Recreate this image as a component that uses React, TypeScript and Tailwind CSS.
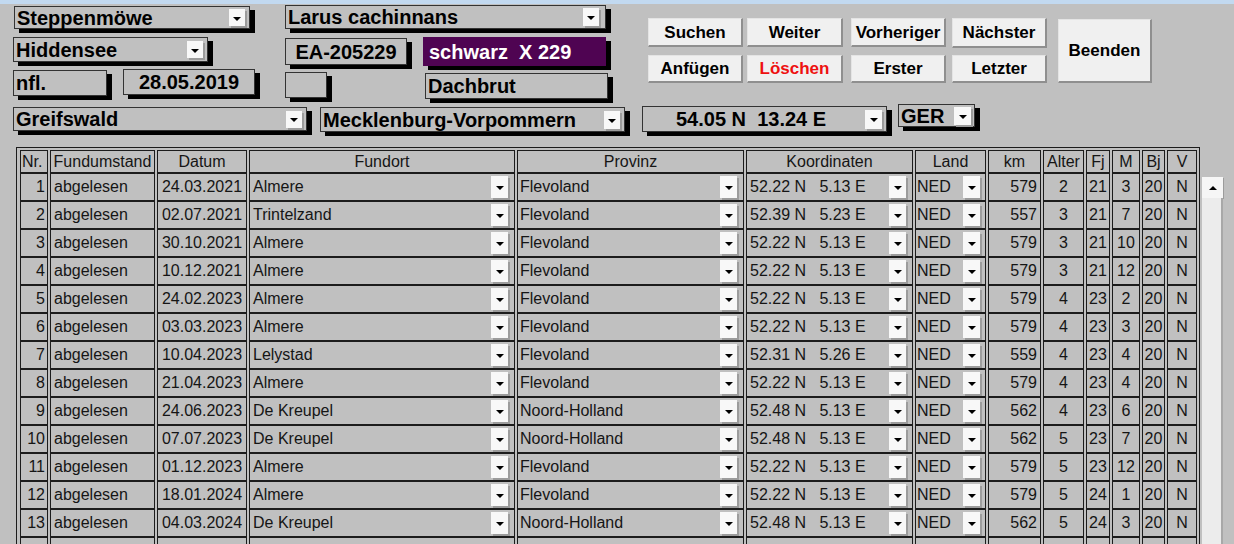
import React from "react";

function TriDown() {
  return <div className="w-0 h-0 border-l-[4px] border-r-[4px] border-t-[4px] border-l-transparent border-r-transparent border-t-black mt-[2px]" />;
}
function TriUp() {
  return <div className="w-0 h-0 border-l-[4px] border-r-[4px] border-b-[4px] border-l-transparent border-r-transparent border-b-black" />;
}

function DD({ cls }: { cls: string }) {
  return (
    <div className={"flex items-center justify-center bg-[#f8f8f8] shadow-[2px_2px_0_#9c9c9c] shrink-0 " + cls}>
      <TriDown />
    </div>
  );
}

function Field({
  cls,
  children,
  dd,
  ddCls,
  textCls,
}: {
  cls: string;
  children?: React.ReactNode;
  dd?: boolean;
  ddCls?: string;
  textCls?: string;
}) {
  return (
    <div
      className={
        "flex items-center border border-[#333333] shadow-[5px_4px_0_#000] font-bold text-[20px] leading-none shrink-0 " +
        cls
      }
    >
      <span className={"flex-1 whitespace-pre " + (textCls ?? "pl-[2px]")}>{children}</span>
      {dd && <DD cls={ddCls ?? "w-[16px] h-[17px] mr-[4px]"} />}
    </div>
  );
}

function Btn({ cls, children }: { cls: string; children: React.ReactNode }) {
  return (
    <div
      className={
        "flex items-center justify-center bg-[#f0f0f0] border-t border-l border-t-[#e4e4e4] border-l-[#e4e4e4] border-r-2 border-b-2 border-r-[#8f8f8f] border-b-[#8f8f8f] font-bold text-[17px] leading-none shrink-0 " +
        cls
      }
    >
      {children}
    </div>
  );
}

type Row = {
  nr: string;
  st: string;
  d: string;
  ort: string;
  prov: string;
  koord: string;
  land: string;
  km: string;
  alter: string;
  fj: string;
  m: string;
  bj: string;
  v: string;
};

const A = "52.22 N   5.13 E";
const K = "52.48 N   5.13 E";

const rows: Row[] = [
  { nr: "1", st: "abgelesen", d: "24.03.2021", ort: "Almere", prov: "Flevoland", koord: A, land: "NED", km: "579", alter: "2", fj: "21", m: "3", bj: "20", v: "N" },
  { nr: "2", st: "abgelesen", d: "02.07.2021", ort: "Trintelzand", prov: "Flevoland", koord: "52.39 N   5.23 E", land: "NED", km: "557", alter: "3", fj: "21", m: "7", bj: "20", v: "N" },
  { nr: "3", st: "abgelesen", d: "30.10.2021", ort: "Almere", prov: "Flevoland", koord: A, land: "NED", km: "579", alter: "3", fj: "21", m: "10", bj: "20", v: "N" },
  { nr: "4", st: "abgelesen", d: "10.12.2021", ort: "Almere", prov: "Flevoland", koord: A, land: "NED", km: "579", alter: "3", fj: "21", m: "12", bj: "20", v: "N" },
  { nr: "5", st: "abgelesen", d: "24.02.2023", ort: "Almere", prov: "Flevoland", koord: A, land: "NED", km: "579", alter: "4", fj: "23", m: "2", bj: "20", v: "N" },
  { nr: "6", st: "abgelesen", d: "03.03.2023", ort: "Almere", prov: "Flevoland", koord: A, land: "NED", km: "579", alter: "4", fj: "23", m: "3", bj: "20", v: "N" },
  { nr: "7", st: "abgelesen", d: "10.04.2023", ort: "Lelystad", prov: "Flevoland", koord: "52.31 N   5.26 E", land: "NED", km: "559", alter: "4", fj: "23", m: "4", bj: "20", v: "N" },
  { nr: "8", st: "abgelesen", d: "21.04.2023", ort: "Almere", prov: "Flevoland", koord: A, land: "NED", km: "579", alter: "4", fj: "23", m: "4", bj: "20", v: "N" },
  { nr: "9", st: "abgelesen", d: "24.06.2023", ort: "De Kreupel", prov: "Noord-Holland", koord: K, land: "NED", km: "562", alter: "4", fj: "23", m: "6", bj: "20", v: "N" },
  { nr: "10", st: "abgelesen", d: "07.07.2023", ort: "De Kreupel", prov: "Noord-Holland", koord: K, land: "NED", km: "562", alter: "5", fj: "23", m: "7", bj: "20", v: "N" },
  { nr: "11", st: "abgelesen", d: "01.12.2023", ort: "Almere", prov: "Flevoland", koord: A, land: "NED", km: "579", alter: "5", fj: "23", m: "12", bj: "20", v: "N" },
  { nr: "12", st: "abgelesen", d: "18.01.2024", ort: "Almere", prov: "Flevoland", koord: A, land: "NED", km: "579", alter: "5", fj: "24", m: "1", bj: "20", v: "N" },
  { nr: "13", st: "abgelesen", d: "04.03.2024", ort: "De Kreupel", prov: "Noord-Holland", koord: K, land: "NED", km: "562", alter: "5", fj: "24", m: "3", bj: "20", v: "N" },
];

const cell = "border border-[#1c1c1c] flex items-center shrink-0 overflow-hidden whitespace-pre";

const W = {
  nr: "w-[28px]",
  st: "w-[105px]",
  d: "w-[90px]",
  ort: "w-[266px]",
  prov: "w-[227px]",
  koord: "w-[167px]",
  land: "w-[71px]",
  km: "w-[53px]",
  alter: "w-[41px]",
  fj: "w-[24px]",
  m: "w-[28px]",
  bj: "w-[23px]",
  v: "w-[30px]",
};

function Header() {
  const h = cell + " h-[23px] justify-center";
  return (
    <div className="flex gap-[2px]">
      <div className={h + " " + W.nr + " !justify-start pl-[1px]"}>Nr.</div>
      <div className={h + " " + W.st}>Fundumstand</div>
      <div className={h + " " + W.d}>Datum</div>
      <div className={h + " " + W.ort}>Fundort</div>
      <div className={h + " " + W.prov}>Provinz</div>
      <div className={h + " " + W.koord}>Koordinaten</div>
      <div className={h + " " + W.land}>Land</div>
      <div className={h + " " + W.km}>km</div>
      <div className={h + " " + W.alter}>Alter</div>
      <div className={h + " " + W.fj}>Fj</div>
      <div className={h + " " + W.m}>M</div>
      <div className={h + " " + W.bj}>Bj</div>
      <div className={h + " " + W.v}>V</div>
    </div>
  );
}

function BodyRow({ r, empty }: { r?: Row; empty?: boolean }) {
  const c = cell + " h-[28px]";
  const ddc = "w-[17px] h-[22px] mr-[6px]";
  return (
    <div className="flex gap-[2px]">
      <div className={c + " " + W.nr + " justify-end pr-[2px]"}>{r?.nr}</div>
      <div className={c + " " + W.st + " pl-[3px]"}>{r?.st}</div>
      <div className={c + " " + W.d + " justify-center"}>{r?.d}</div>
      <div className={c + " " + W.ort}>
        <span className="flex-1 pl-[3px]">{r?.ort}</span>
        {!empty && <DD cls={ddc} />}
      </div>
      <div className={c + " " + W.prov}>
        <span className="flex-1 pl-[2px]">{r?.prov}</span>
        {!empty && <DD cls={ddc} />}
      </div>
      <div className={c + " " + W.koord}>
        <span className="flex-1 pl-[3px]">{r?.koord}</span>
        {!empty && <DD cls={ddc} />}
      </div>
      <div className={c + " " + W.land}>
        <span className="flex-1 pl-[1px]">{r?.land}</span>
        {!empty && <DD cls={"w-[17px] h-[22px] mr-[5px]"} />}
      </div>
      <div className={c + " " + W.km + " justify-end pr-[3px]"}>{r?.km}</div>
      <div className={c + " " + W.alter + " justify-center"}>{r?.alter}</div>
      <div className={c + " " + W.fj + " justify-center"}>{r?.fj}</div>
      <div className={c + " " + W.m + " justify-center"}>{r?.m}</div>
      <div className={c + " " + W.bj + " justify-center"}>{r?.bj}</div>
      <div className={c + " " + W.v + " justify-center"}>{r?.v}</div>
    </div>
  );
}

export default function App() {
  return (
    <div className="w-[1234px] h-[544px] overflow-hidden bg-[#c0c0c0] text-black font-['Liberation_Sans',Arial,sans-serif]">
      <div className="h-[4px] bg-[#c2d9f0]" />

      {/* upper form */}
      <div className="flex">
        <div className="flex flex-col w-[612px] shrink-0">
          {/* row 1 */}
          <div className="flex items-start h-[29px]">
            <Field cls="ml-[14px] mt-[2px] w-[236px] h-[23px]" dd>
              Steppenmöwe
            </Field>
            <Field cls="ml-[35px] mt-[1px] w-[321px] h-[24px]" dd ddCls="w-[16px] h-[18px] mr-[6px]">
              Larus cachinnans
            </Field>
          </div>
          {/* row 2 */}
          <div className="flex items-start h-[33px]">
            <Field cls="ml-[13px] mt-[4px] w-[195px] h-[25px]" dd>
              Hiddensee
            </Field>
            <Field cls="ml-[77px] mt-[5px] w-[122px] h-[27px]" textCls="text-center">
              EA-205229
            </Field>
            <Field
              cls="ml-[16px] mt-[4px] w-[183px] h-[29px] !bg-[#4f0452] text-white !border-[#4f0452]"
              textCls="pl-[5px]"
            >
              {"schwarz  X 229"}
            </Field>
          </div>
          {/* row 3 */}
          <div className="flex items-start h-[34px]">
            <Field cls="ml-[13px] mt-[4px] w-[94px] h-[26px]">nfl.</Field>
            <Field cls="ml-[16px] mt-[3px] w-[132px] h-[26px]" textCls="text-center">
              28.05.2019
            </Field>
            <Field cls="ml-[30px] mt-[6px] w-[42px] h-[26px]" />
            <Field cls="ml-[98px] mt-[7px] w-[183px] h-[26px]">Dachbrut</Field>
          </div>
        </div>

        {/* buttons */}
        <div className="flex ml-[36px] mt-[14px]">
          <div className="flex flex-col">
            <div className="flex h-[29px]">
              <Btn cls="w-[95px] h-[29px]">Suchen</Btn>
              <Btn cls="ml-[4px] w-[96px] h-[29px]">Weiter</Btn>
              <Btn cls="ml-[8px] w-[95px] h-[29px]">Vorheriger</Btn>
              <Btn cls="ml-[6px] w-[95px] h-[30px]">Nächster</Btn>
            </div>
            <div className="flex mt-[8px]">
              <Btn cls="w-[95px] h-[28px]">Anfügen</Btn>
              <Btn cls="ml-[4px] w-[96px] h-[28px] text-[#ee1111]">Löschen</Btn>
              <Btn cls="ml-[8px] w-[95px] h-[28px]">Erster</Btn>
              <Btn cls="ml-[6px] w-[95px] h-[28px]">Letzter</Btn>
            </div>
          </div>
          <Btn cls="ml-[11px] mt-[1px] w-[94px] h-[64px]">Beenden</Btn>
        </div>
      </div>

      {/* row 4 */}
      <div className="flex items-start h-[36px]">
        <Field cls="ml-[13px] mt-[7px] w-[294px] h-[24px]" dd>
          Greifswald
        </Field>
        <Field cls="ml-[13px] mt-[7px] w-[305px] h-[25px]" dd ddCls="w-[16px] h-[18px] mr-[4px]">
          Mecklenburg-Vorpommern
        </Field>
        <Field cls="ml-[17px] mt-[6px] w-[245px] h-[26px]" dd ddCls="w-[17px] h-[19px] mr-[4px]" textCls="pl-[33px]">
          {"54.05 N  13.24 E"}
        </Field>
        <Field cls="ml-[11px] mt-[4px] w-[77px] h-[23px]" dd ddCls="w-[17px] h-[18px] mr-[3px]">
          GER
        </Field>
      </div>

      {/* table */}
      <div className="flex mt-[11px]">
        <div className="ml-[16px] border border-[#1c1c1c] pt-[2px] pl-[3px] pr-[2px] text-[16px] leading-none text-[#151515] shrink-0">
          <Header />
          {rows.map((r) => (
            <BodyRow key={r.nr} r={r} />
          ))}
          <BodyRow empty />
        </div>
        <div className="ml-[2px] mt-[30px] w-[21px] flex flex-col shrink-0">
          <div className="h-[21px] bg-[#f6f6f6] shadow-[1px_1px_0_#9c9c9c] flex items-center justify-center">
            <TriUp />
          </div>
          <div className="h-[400px] bg-[#ececec] border-r-2 border-r-[#a8a8a8]" />
        </div>
      </div>
    </div>
  );
}
